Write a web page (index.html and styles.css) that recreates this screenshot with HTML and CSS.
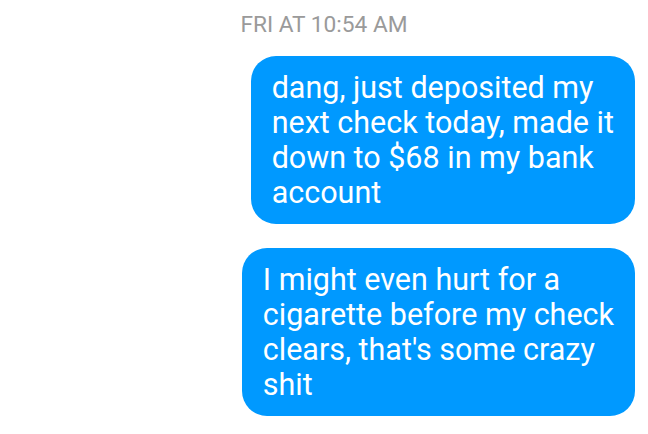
FILE: index.html
```html
<!DOCTYPE html>
<html>
<head>
<meta charset="utf-8">
<link rel="stylesheet" href="styles.css">
</head>
<body>
<div class="thread">
  <div class="timestamp">FRI AT 10:54 AM</div>
  <div class="row"><div class="bubble">dang, just deposited my<br>next check today, made it<br>down to $68 in my bank<br>account</div></div>
  <div class="row"><div class="bubble">I might even hurt for a<br>cigarette before my check<br>clears, that's some crazy<br>shit</div></div>
</div>
</body>
</html>
```
FILE: styles.css
```css
html, body {
  margin: 0;
  padding: 0;
  background: #ffffff;
  font-family: Roboto, "Noto Sans", sans-serif;
}
.thread {
  display: flex;
  flex-direction: column;
  padding: 12px 13px 0 0;
  gap: 24px;
}
.timestamp {
  text-align: center;
  color: #9a9a9a;
  font-size: 22.7px;
  line-height: 26px;
  padding-left: 13px;
  margin-bottom: -6px;
}
.row {
  display: flex;
  justify-content: flex-end;
}
.bubble {
  background: #0099ff;
  color: #ffffff;
  font-size: 30.5px;
  line-height: 35px;
  padding: 14px 21px 14px 21px;
  border-radius: 25px;
  white-space: nowrap;
}
```
